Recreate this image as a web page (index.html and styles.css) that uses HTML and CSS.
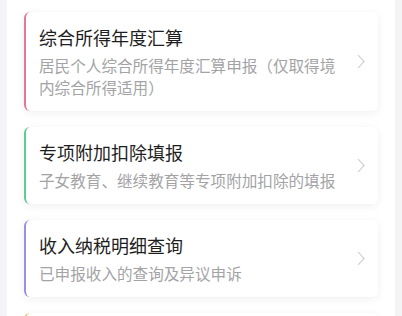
FILE: index.html
```html
<!DOCTYPE html>
<html lang="zh-CN">
<head>
<meta charset="utf-8">
<link rel="stylesheet" href="styles.css">
</head>
<body>
<div class="panel">
  <div class="card pink">
    <div class="text">
      <div class="title">综合所得年度汇算</div>
      <div class="desc">居民个人综合所得年度汇算申报（仅取得境内综合所得适用）</div>
    </div>
    <svg class="chev" width="8" height="15" viewBox="0 0 8 15"><path d="M1 1 L7 7.5 L1 14" fill="none" stroke="#c9c9cc" stroke-width="1.1"/></svg>
  </div>
  <div class="card green">
    <div class="text">
      <div class="title">专项附加扣除填报</div>
      <div class="desc">子女教育、继续教育等专项附加扣除的填报</div>
    </div>
    <svg class="chev" width="8" height="15" viewBox="0 0 8 15"><path d="M1 1 L7 7.5 L1 14" fill="none" stroke="#c9c9cc" stroke-width="1.1"/></svg>
  </div>
  <div class="card purple">
    <div class="text">
      <div class="title">收入纳税明细查询</div>
      <div class="desc">已申报收入的查询及异议申诉</div>
    </div>
    <svg class="chev" width="8" height="15" viewBox="0 0 8 15"><path d="M1 1 L7 7.5 L1 14" fill="none" stroke="#c9c9cc" stroke-width="1.1"/></svg>
  </div>
  <div class="card orange stub"></div>
</div>
</body>
</html>
```
FILE: styles.css
```css
html, body {
  margin: 0;
  padding: 0;
  background: #f4f4f6;
  font-family: "Noto Sans CJK SC", "Noto Sans", sans-serif;
}
.panel {
  margin: 0 7px;
  background: #ffffff;
  padding: 12px 17px 0 17px;
  min-height: 400px;
}
.card {
  display: flex;
  align-items: center;
  background: #ffffff;
  border-left: 2px solid #e2799c;
  border-radius: 6px;
  box-shadow: 0 2px 8px rgba(40, 40, 80, 0.07);
  padding: 12px 0 13px 13px;
  margin-bottom: 16px;
}
.card.green { border-left-color: #5ccb96; }
.card.purple { border-left-color: #9c8ee2; }
.card.orange { border-left-color: #f0b35a; }
.card.stub { height: 52px; }
.text {
  width: 305px;
  flex: none;
}
.title {
  font-size: 18px;
  line-height: 26px;
  color: #1e1e1e;
  margin-bottom: 4px;
}
.desc {
  font-size: 15.6px;
  line-height: 22px;
  color: #a3a3a6;
}
.chev {
  flex: none;
  margin-left: 13px;
}
```
